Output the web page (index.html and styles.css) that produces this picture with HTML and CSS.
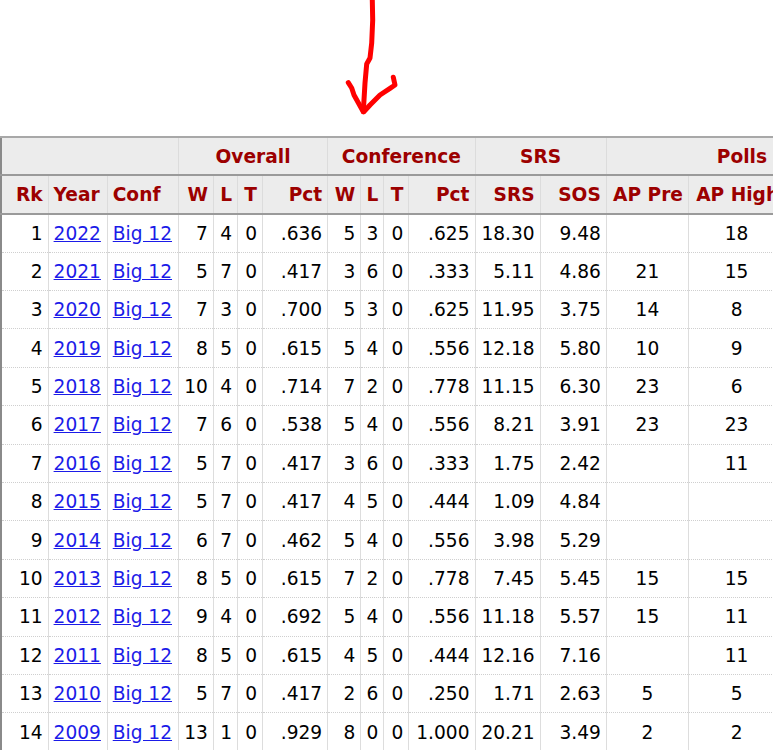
FILE: index.html
```html
<!DOCTYPE html>
<html>
<head>
<meta charset="utf-8">
<link rel="stylesheet" href="styles.css">
</head>
<body>
<div class="pointer">
  <svg class="arrow" width="773" height="136" viewBox="0 0 773 136">
    <path d="M372.3 0 L372.7 20 L371.7 43 L370 58 L366.7 64 L365 83 L363.3 111.7" />
    <path d="M348.3 82.7 L351.7 88 L354 95 L363.3 111.7" />
    <path d="M393.3 77.3 L395 85 L390 88.3 L380 95 L370 105 L364 111.7" />
  </svg>
</div>
<table class="stats">
  <colgroup>
    <col class="c-rk"><col class="c-year"><col class="c-conf">
    <col class="c-w"><col class="c-l"><col class="c-t"><col class="c-pct">
    <col class="c-w2"><col class="c-l2"><col class="c-t2"><col class="c-pct2">
    <col class="c-srs"><col class="c-sos">
    <col class="c-appre"><col class="c-aphigh"><col class="c-appost">
  </colgroup>
  <thead>
    <tr class="over">
      <th colspan="3"></th>
      <th colspan="4" class="grp">Overall</th>
      <th colspan="4" class="grp">Conference</th>
      <th colspan="2" class="grp">SRS</th>
      <th colspan="3" class="grp">Polls</th>
    </tr>
    <tr class="heads">
      <th>Rk</th><th class="left">Year</th><th class="left">Conf</th>
      <th>W</th><th>L</th><th>T</th><th>Pct</th>
      <th>W</th><th>L</th><th>T</th><th>Pct</th>
      <th>SRS</th><th>SOS</th>
      <th>AP Pre</th><th>AP High</th><th>AP Post</th>
    </tr>
  </thead>
  <tbody>
    <tr><td>1</td><td class="left"><a href="#">2022</a></td><td class="left"><a href="#">Big 12</a></td><td>7</td><td>4</td><td>0</td><td>.636</td><td>5</td><td>3</td><td>0</td><td>.625</td><td>18.30</td><td>9.48</td><td class="mid"></td><td class="mid">18</td><td class="mid"></td></tr>
    <tr><td>2</td><td class="left"><a href="#">2021</a></td><td class="left"><a href="#">Big 12</a></td><td>5</td><td>7</td><td>0</td><td>.417</td><td>3</td><td>6</td><td>0</td><td>.333</td><td>5.11</td><td>4.86</td><td class="mid">21</td><td class="mid">15</td><td class="mid"></td></tr>
    <tr><td>3</td><td class="left"><a href="#">2020</a></td><td class="left"><a href="#">Big 12</a></td><td>7</td><td>3</td><td>0</td><td>.700</td><td>5</td><td>3</td><td>0</td><td>.625</td><td>11.95</td><td>3.75</td><td class="mid">14</td><td class="mid">8</td><td class="mid"></td></tr>
    <tr><td>4</td><td class="left"><a href="#">2019</a></td><td class="left"><a href="#">Big 12</a></td><td>8</td><td>5</td><td>0</td><td>.615</td><td>5</td><td>4</td><td>0</td><td>.556</td><td>12.18</td><td>5.80</td><td class="mid">10</td><td class="mid">9</td><td class="mid"></td></tr>
    <tr><td>5</td><td class="left"><a href="#">2018</a></td><td class="left"><a href="#">Big 12</a></td><td>10</td><td>4</td><td>0</td><td>.714</td><td>7</td><td>2</td><td>0</td><td>.778</td><td>11.15</td><td>6.30</td><td class="mid">23</td><td class="mid">6</td><td class="mid"></td></tr>
    <tr><td>6</td><td class="left"><a href="#">2017</a></td><td class="left"><a href="#">Big 12</a></td><td>7</td><td>6</td><td>0</td><td>.538</td><td>5</td><td>4</td><td>0</td><td>.556</td><td>8.21</td><td>3.91</td><td class="mid">23</td><td class="mid">23</td><td class="mid"></td></tr>
    <tr><td>7</td><td class="left"><a href="#">2016</a></td><td class="left"><a href="#">Big 12</a></td><td>5</td><td>7</td><td>0</td><td>.417</td><td>3</td><td>6</td><td>0</td><td>.333</td><td>1.75</td><td>2.42</td><td class="mid"></td><td class="mid">11</td><td class="mid"></td></tr>
    <tr><td>8</td><td class="left"><a href="#">2015</a></td><td class="left"><a href="#">Big 12</a></td><td>5</td><td>7</td><td>0</td><td>.417</td><td>4</td><td>5</td><td>0</td><td>.444</td><td>1.09</td><td>4.84</td><td class="mid"></td><td class="mid"></td><td class="mid"></td></tr>
    <tr><td>9</td><td class="left"><a href="#">2014</a></td><td class="left"><a href="#">Big 12</a></td><td>6</td><td>7</td><td>0</td><td>.462</td><td>5</td><td>4</td><td>0</td><td>.556</td><td>3.98</td><td>5.29</td><td class="mid"></td><td class="mid"></td><td class="mid"></td></tr>
    <tr><td>10</td><td class="left"><a href="#">2013</a></td><td class="left"><a href="#">Big 12</a></td><td>8</td><td>5</td><td>0</td><td>.615</td><td>7</td><td>2</td><td>0</td><td>.778</td><td>7.45</td><td>5.45</td><td class="mid">15</td><td class="mid">15</td><td class="mid"></td></tr>
    <tr><td>11</td><td class="left"><a href="#">2012</a></td><td class="left"><a href="#">Big 12</a></td><td>9</td><td>4</td><td>0</td><td>.692</td><td>5</td><td>4</td><td>0</td><td>.556</td><td>11.18</td><td>5.57</td><td class="mid">15</td><td class="mid">11</td><td class="mid"></td></tr>
    <tr><td>12</td><td class="left"><a href="#">2011</a></td><td class="left"><a href="#">Big 12</a></td><td>8</td><td>5</td><td>0</td><td>.615</td><td>4</td><td>5</td><td>0</td><td>.444</td><td>12.16</td><td>7.16</td><td class="mid"></td><td class="mid">11</td><td class="mid"></td></tr>
    <tr><td>13</td><td class="left"><a href="#">2010</a></td><td class="left"><a href="#">Big 12</a></td><td>5</td><td>7</td><td>0</td><td>.417</td><td>2</td><td>6</td><td>0</td><td>.250</td><td>1.71</td><td>2.63</td><td class="mid">5</td><td class="mid">5</td><td class="mid"></td></tr>
    <tr><td>14</td><td class="left"><a href="#">2009</a></td><td class="left"><a href="#">Big 12</a></td><td>13</td><td>1</td><td>0</td><td>.929</td><td>8</td><td>0</td><td>0</td><td>1.000</td><td>20.21</td><td>3.49</td><td class="mid">2</td><td class="mid">2</td><td class="mid"></td></tr>
  </tbody>
</table>
</body>
</html>
```
FILE: styles.css
```css
html, body {
  margin: 0;
  padding: 0;
  overflow: hidden;
  background: #ffffff;
}
body {
  font-family: "DejaVu Sans", Verdana, sans-serif;
  font-size: 18.6px;
  color: #000;
}
.pointer {
  height: 136px;
}
.arrow {
  display: block;
}
.arrow path {
  fill: none;
  stroke: #ff0000;
  stroke-width: 5;
  stroke-linecap: round;
  stroke-linejoin: round;
}
.stats {
  border-collapse: collapse;
  table-layout: fixed;
  width: 877px;
  border-top: 2px solid #a8a8a8;
  border-left: 2px solid #8a8a8a;
}
.c-rk { width: 47px; }
.c-year { width: 59px; }
.c-conf { width: 71px; }
.c-w { width: 35px; }
.c-l { width: 24px; }
.c-t { width: 25px; }
.c-pct { width: 65px; }
.c-w2 { width: 33px; }
.c-l2 { width: 23px; }
.c-t2 { width: 25px; }
.c-pct2 { width: 66px; }
.c-srs { width: 65px; }
.c-sos { width: 66px; }
.c-appre { width: 82px; }
.c-aphigh { width: 96px; }
.c-appost { width: 92px; }

.stats th, .stats td {
  height: 38.4px;
  padding: 0 5px;
  text-align: right;
  vertical-align: middle;
  white-space: nowrap;
  overflow: hidden;
  box-sizing: border-box;
}
.stats th {
  background: #ececec;
  color: #9c0000;
  font-weight: bold;
  border-left: 1px solid #dcdcdc;
}
.stats .over th {
  border-bottom: 2px solid #9a9a9a;
}
.stats .over th.grp {
  text-align: center;
}
.stats .heads th {
  border-bottom: 2px solid #9a9a9a;
}
.stats td {
  border-left: 1px solid #dddddd;
  border-bottom: 1px dotted #cfcfcf;
}
.stats .left {
  text-align: left;
}
.stats .mid {
  text-align: center;
}
.stats a {
  color: #1b1be8;
  text-decoration: underline;
}
```
